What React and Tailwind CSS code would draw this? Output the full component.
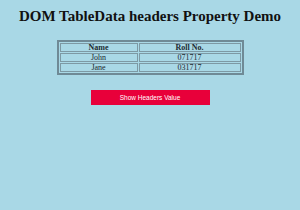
import React from "react";

const rows = [
  { name: "John", roll: "071717" },
  { name: "Jane", roll: "031717" },
];

export default function App() {
  return (
    <div className="w-[300px] h-[210px] bg-[#a9d8e6] flex flex-col items-center" style={{ fontFamily: '"Liberation Serif", serif' }}>
      <h1 className="mt-[8px] text-[15px] leading-[16px] font-bold text-[#111]">DOM TableData headers Property Demo</h1>
      <table className="mt-[16px] w-[187px] border-2 border-[#6f8a96] border-separate border-spacing-[1px] text-[8px] leading-[7px] text-[#1c2a30]">
        <thead>
          <tr>
            <th className="w-[78px] h-[9px] p-0 border border-[#7d99a4] font-bold">Name</th>
            <th className="h-[9px] p-0 border border-[#7d99a4] font-bold">Roll No.</th>
          </tr>
        </thead>
        <tbody>
          {rows.map((r) => (
            <tr key={r.name}>
              <td className="h-[9px] p-0 border border-[#7d99a4] text-center">{r.name}</td>
              <td className="h-[9px] p-0 border border-[#7d99a4] text-center">{r.roll}</td>
            </tr>
          ))}
        </tbody>
      </table>
      <button
        className="mt-[15px] w-[119px] h-[15px] bg-[#e8003a] text-white text-[6.5px]"
        style={{ fontFamily: '"Liberation Sans", sans-serif' }}
      >
        Show Headers Value
      </button>
    </div>
  );
}
